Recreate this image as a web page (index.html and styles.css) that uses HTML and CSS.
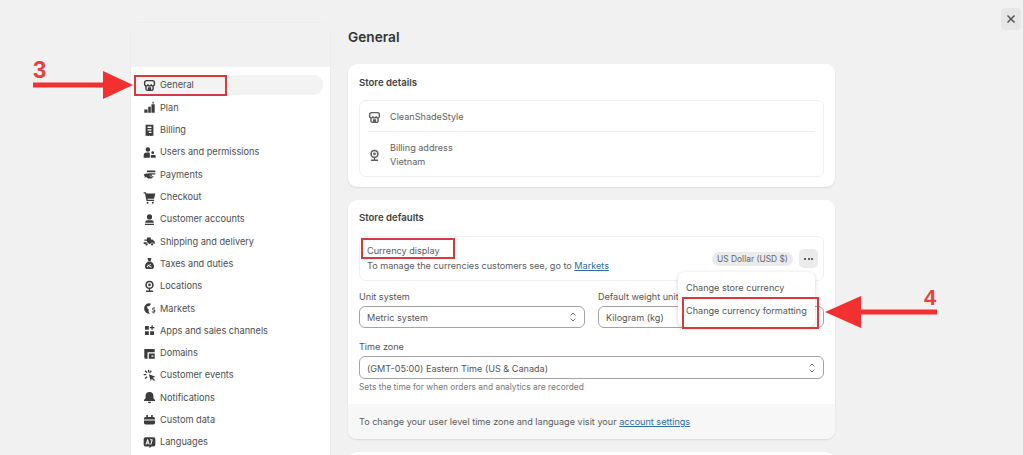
FILE: index.html
```html
<!DOCTYPE html>
<html lang="en">
<head>
<meta charset="utf-8">
<title>General settings</title>
<link rel="stylesheet" href="styles.css">
</head>
<body>
<svg class="sprite" aria-hidden="true">
  <symbol id="i-store" viewBox="0 0 20 20"><path fill="none" stroke="currentColor" stroke-width="2.200" d="M5.500 2.500h9a3 3 0 0 1 3 3V8a2.500 2.500 0 0 1-5 .2 2.500 2.500 0 0 1-5 0 2.500 2.500 0 0 1-5-.2V5.500a3 3 0 0 1 3-3ZM4.500 10.500V15a2.500 2.500 0 0 0 2.500 2.500h6a2.500 2.500 0 0 0 2.500-2.500v-4.500"/><path fill="currentColor" d="M7.500 12.500h5V17h-5z"/></symbol>
  <symbol id="i-pin" viewBox="0 0 20 20"><path fill="currentColor" fill-rule="evenodd" d="M10 1a6.500 6.500 0 0 1 1 12.900V16h3.500a1.200 1.200 0 0 1 0 2.500h-9a1.200 1.200 0 0 1 0-2.500H9v-2.100A6.500 6.500 0 0 1 10 1Zm0 2.500a4 4 0 1 0 0 8 4 4 0 0 0 0-8Zm0 2a2 2 0 1 1 0 4 2 2 0 0 1 0-4Z"/></symbol>
</svg>

<div class="page">
  <aside class="sidebar">
    <div class="sidebar-head"></div>
    <nav class="nav">
      <a class="nav-item active"><svg class="ico"><use href="#i-store"/></svg>General</a>
      <a class="nav-item"><svg class="ico" viewBox="0 0 20 20"><path d="M13 5h5v13h-5zM8 9h4v9H8zM2 13h5v5H2zM14.500 1h2v3h-2z"/></svg>Plan</a>
      <a class="nav-item"><svg class="ico" viewBox="0 0 20 20"><path fill-rule="evenodd" d="M4 1h12v18l-2-1.500-2 1.500-2-1.500L8 19l-2-1.500L4 19Zm3 3v2h6V4Zm0 4v2h6V8Zm2 4v2h4v-2Z"/></svg>Billing</a>
      <a class="nav-item"><svg class="ico" viewBox="0 0 20 20"><path d="M7.500 2a3.500 3.500 0 1 1 0 7 3.500 3.500 0 0 1 0-7ZM1 18v-3a5 5 0 0 1 5-5h3a4 4 0 0 1 1.500.300V18ZM15 8a2.200 2.200 0 1 1 0 4.400A2.200 2.200 0 0 1 15 8Zm-3 6h6a1.500 1.500 0 0 1 1.500 1.500V18H12Z"/></svg>Users and permissions</a>
      <a class="nav-item"><svg class="ico" viewBox="0 0 20 20"><path d="M6 4h13v2.500H6zM8 8h11v2H8zM1 10l5-2 3 2 5 .5v1.500H9l3 1 5-.5-4 3.500H8l-3-2-4 1 2-1.500-1-1.500Z"/></svg>Payments</a>
      <a class="nav-item"><svg class="ico" viewBox="0 0 20 20"><path d="M1 2h3.500l.5 2h14l-2 8H7l.3 1.500H17V15.500H5.500L3 4H1ZM7 16.500a1.500 1.500 0 1 1 0 3 1.500 1.500 0 0 1 0-3Zm8 0a1.500 1.500 0 1 1 0 3 1.500 1.500 0 0 1 0-3Z"/></svg>Checkout</a>
      <a class="nav-item"><svg class="ico" viewBox="0 0 20 20"><path d="M10 2a4 4 0 1 1 0 8 4 4 0 0 1 0-8ZM6.500 11h7a3 3 0 0 1 3 3v1H3.500v-1a3 3 0 0 1 3-3ZM3 16.500h14V18.500H3Z"/></svg>Customer accounts</a>
      <a class="nav-item"><svg class="ico" viewBox="0 0 20 20"><path d="M6 4h6v3h2.500l3.500 3v4h-1.500a2.500 2.500 0 0 0-5 0h-2.500a2.500 2.500 0 0 0-5 0H1v-3h5V9H2V7h4Zm-.5 8.500a1.800 1.800 0 1 1 0 3.600 1.800 1.800 0 0 1 0-3.600Zm8.500 0a1.800 1.800 0 1 1 0 3.600 1.800 1.800 0 0 1 0-3.600Z"/></svg>Shipping and delivery</a>
      <a class="nav-item"><svg class="ico" viewBox="0 0 20 20"><path fill-rule="evenodd" d="M7 1.500h6L11.800 6H8.200ZM8 7h4c3 1.500 5 4.500 5 7.500 0 2.500-2 4-4 4H7c-2 0-4-1.500-4-4C3 11.500 5 8.500 8 7Zm-.5 4.500L6.500 12.500l6 4 1-1Zm.5 3a1 1 0 1 0 0 .1Zm4-3a1 1 0 1 0 0 .1Z"/></svg>Taxes and duties</a>
      <a class="nav-item"><svg class="ico"><use href="#i-pin"/></svg>Locations</a>
      <a class="nav-item"><svg class="ico" viewBox="0 0 20 20"><path d="M9 2a8 8 0 0 1 3.500.800L10 6 6 7l1 3 2 1.500-.5 3 2 3.500A8 8 0 0 1 9 2ZM16 8.500h2.500V10H16a.8.800 0 0 0 0 1.600h1a2.200 2.200 0 0 1 .5 4.300V17.500H16v-1.500h-2.500v-1.500H17a.8.800 0 0 0 0-1.500h-1a2.300 2.300 0 0 1 0-4.500Z"/></svg>Markets</a>
      <a class="nav-item"><svg class="ico" viewBox="0 0 20 20"><path d="M3 3h6v6H3zM3 11h6v6H3zM11 11h6v6h-6zM13 2h2v2.500h2.500v2H15V9h-2V6.500h-2.500v-2H13Z"/></svg>Apps and sales channels</a>
      <a class="nav-item"><svg class="ico" viewBox="0 0 20 20"><path fill-rule="evenodd" d="M2 3h16v5H7v10H4a2 2 0 0 1-2-2ZM9 10h9v8H9Zm4 3v2h3v-2Z"/></svg>Domains</a>
      <a class="nav-item"><svg class="ico" viewBox="0 0 20 20"><path d="M9 8l10 4-4 1.500 3.500 3.500-1.500 1.500-3.500-3.500L12 19ZM7.500 1h2v4h-2zM1 7.500h4v2H1zM2.500 3.500 4 2l3 3-1.500 1.500ZM2.500 14l3-3L7 12.500l-3 3ZM12 2l1.500 1.500-3 3L9 5Z"/></svg>Customer events</a>
      <a class="nav-item"><svg class="ico" viewBox="0 0 20 20"><path d="M10 1.500a6 6 0 0 1 6 6V11l2.500 3v1.500h-17V14L4 11V7.500a6 6 0 0 1 6-6ZM7.500 16.500h5a2.500 2.500 0 0 1-5 0Z"/></svg>Notifications</a>
      <a class="nav-item"><svg class="ico" viewBox="0 0 20 20"><path d="M5 3h2.500v3h5V3H15v3h1a2.500 2.500 0 0 1 2.500 2.500V10h-17V8.500A2.500 2.500 0 0 1 4 6h1ZM1.500 11.500h17V15a2.500 2.500 0 0 1-2.500 2.500H4A2.500 2.500 0 0 1 1.500 15Z"/></svg>Custom data</a>
      <a class="nav-item"><svg class="ico" viewBox="0 0 20 20"><path fill-rule="evenodd" d="M4 2h12a3 3 0 0 1 3 3v8a3 3 0 0 1-3 3h-3l-3 3v-3H4a3 3 0 0 1-3-3V5a3 3 0 0 1 3-3Zm2.500 3L3.800 13h1.700l.5-1.500h2L8.500 13h1.700L7.700 5Zm.5 2.500.6 2.500H6.400ZM11 5v1.500h2.200L11 13h1.800l2-6.500V5Z"/></svg>Languages</a>
    </nav>
  </aside>

  <main class="main">
    <h1 class="page-title">General</h1>

    <section class="card">
      <div class="card-body">
        <h2 class="card-title">Store details</h2>
        <div class="box">
          <div class="detail-row store-row">
            <svg class="ico ico-light"><use href="#i-store"/></svg>
            <span>CleanShadeStyle</span>
          </div>
          <div class="divider"></div>
          <div class="detail-row address-row">
            <svg class="ico ico-light"><use href="#i-pin"/></svg>
            <div><div>Billing address</div><div>Vietnam</div></div>
          </div>
        </div>
      </div>
    </section>

    <section class="card">
      <div class="card-body card-body-tight">
        <h2 class="card-title">Store defaults</h2>
        <div class="box currency-box">
          <div class="currency-text">
            <div class="currency-name">Currency display</div>
            <div>To manage the currencies customers see, go to <a class="link">Markets</a></div>
          </div>
          <span class="badge">US Dollar (USD $)</span>
          <span class="more"><i></i><i></i><i></i></span>
        </div>
        <div class="field-grid">
          <div class="field">
            <label class="label">Unit system</label>
            <div class="select">Metric system<svg class="chev" viewBox="0 0 10 14"><path d="M2 5l3-3 3 3M2 9l3 3 3-3"/></svg></div>
          </div>
          <div class="field">
            <label class="label">Default weight unit</label>
            <div class="select">Kilogram (kg)<svg class="chev" viewBox="0 0 10 14"><path d="M2 5l3-3 3 3M2 9l3 3 3-3"/></svg></div>
          </div>
          <div class="field field-wide">
            <label class="label">Time zone</label>
            <div class="select select-tall">(GMT-05:00) Eastern Time (US &amp; Canada)<svg class="chev" viewBox="0 0 10 14"><path d="M2 5l3-3 3 3M2 9l3 3 3-3"/></svg></div>
            <p class="help">Sets the time for when orders and analytics are recorded</p>
          </div>
        </div>
      </div>
      <div class="card-foot">To change your user level time zone and language visit your <a class="link">account settings</a></div>
    </section>

    <section class="card card-next"></section>
  </main>
</div>

<button class="close" aria-label="Close"><svg viewBox="0 0 10 10"><path d="M1.500 1.500l7 7M8.500 1.500l-7 7"/></svg></button>
<div class="scrollbar"></div>

<div class="menu">
  <div class="menu-item">Change store currency</div>
  <div class="menu-item">Change currency formatting</div>
</div>

<div class="mark mark-general"></div>
<div class="mark mark-currency"></div>
<div class="mark mark-format"></div>

<span class="step step-3">3</span>
<span class="step step-4">4</span>
<svg class="arrow arrow-left" viewBox="0 0 100 28"><path d="M0 11.500h70V0l30 14-30 14V16.500H0Z"/></svg>
<svg class="arrow arrow-right" viewBox="0 0 112 32"><path d="M112 13.500H36V0L0 16l36 16V18.500h76Z"/></svg>
</body>
</html>
```
FILE: styles.css
```css
* { box-sizing: border-box; }
html, body { margin: 0; height: 455px; overflow: hidden; }
body {
  background: #f1f1f1;
  font-family: Inter, "Liberation Sans", sans-serif;
  font-size: 9.200px;
  line-height: 14px;
  color: #4d4d4d;
}
.sprite { display: none; }
.page { display: flex; height: 455px; padding: 23px 0 0 131px; overflow: hidden; }

/* sidebar */
.sidebar {
  width: 199px;
  flex: none;
  height: 460px;
  background: #fff;
  border-radius: 9px 9px 0 0;
  overflow: hidden;
  box-shadow: 0 0 0 1px #ececec;
}
.sidebar-head { height: 44px; background: #f1f1f1; }
.nav { padding: 7.400px 7px 0 4px; display: flex; flex-direction: column; }
.nav-item {
  display: flex;
  align-items: center;
  gap: 4.500px;
  height: 22.300px;
  padding-left: 7.500px;
  border-radius: 9px;
  white-space: nowrap;
}
.nav-item.active { background: #f3f3f3; height: 20px; margin: 1px 0 1.300px; }
.ico { width: 13px; height: 13px; flex: none; fill: #3c3c3c; color: #3c3c3c; }
.ico-light { fill: #5d5d5d; color: #5d5d5d; }

/* main */
.main { width: 505px; padding-left: 18px; flex: none; font-size: 9.100px; }
.page-title { margin: 0 0 13px; font-size: 13.700px; line-height: 29px; height: 28px; font-weight: 600; color: #333; }
.card {
  background: #fff;
  border-radius: 9px;
  margin-bottom: 13px;
  overflow: hidden;
  box-shadow: 0 1px 2px rgba(0, 0, 0, .1);
}
.card-body { padding: 12px 11px 10px; }
.card-body-tight { padding-top: 11px; }
.card-title { margin: 0 0 10px; font-size: 9.600px; line-height: 14px; font-weight: 600; color: #404040; }
.box { border: 1px solid #efefef; border-radius: 7px; }
.detail-row { display: flex; align-items: center; gap: 9px; padding: 2px 8px 0; color: #616161; }
.store-row { height: 30px; }
.address-row { height: 44px; }
.divider { height: 1px; margin: 0 8px; background: #eee; }

.currency-box { display: flex; align-items: center; height: 45px; padding: 0 5px 0 7px; margin-top: 11px; }
.currency-text { flex: 1; color: #5b5b5b; padding-bottom: 1px; }
.currency-name { margin-bottom: 1px; }
.badge { background: #ebebeb; color: #666; border-radius: 7px; font-size: 8.400px; line-height: 14px; padding: 0 4px; width: 81px; text-align: center; white-space: nowrap; margin-right: 6px; }
.more { display: flex; align-items: center; justify-content: center; gap: 1.500px; width: 19px; height: 19px; background: #ebebeb; border-radius: 5px; }
.more i { width: 2px; height: 2px; border-radius: 50%; background: #333; }
.link { color: #2a6f9e; text-decoration: underline; }

.field-grid { display: grid; grid-template-columns: 1fr 1fr; column-gap: 13px; row-gap: 11px; margin-top: 8px; }
.field-wide { grid-column: 1 / -1; }
.label { display: block; padding-top: 1px; margin-bottom: 2px; color: #555; }
.select {
  display: flex;
  align-items: center;
  justify-content: space-between;
  height: 22px;
  padding: 2px 7px 0 7px;
  background: #fff;
  border: 1px solid #a3a3a3;
  border-radius: 6px;
  color: #555;
}
.select-tall { height: 23px; }
.chev { width: 8px; height: 12px; margin-top: -2px; fill: none; stroke: #666; stroke-width: 1.200; }
.help { margin: 2px 0 0; font-size: 8.400px; line-height: 13px; color: #777; }
.card-foot { height: 35px; padding: 0 11px; line-height: 36px; background: #f7f7f7; color: #5b5b5b; white-space: nowrap; }
.card-next { height: 40px; margin-bottom: 0; }

/* overlays */
.close { position: absolute; left: 1001px; top: 8px; width: 20px; height: 22px; padding: 0; border: 0; border-radius: 4px; background: #e6e6e6; display: flex; align-items: center; justify-content: center; }
.close svg { width: 10px; height: 10px; fill: none; stroke: #555; stroke-width: 1.500; }
.scrollbar { position: absolute; left: 1023px; top: 0; width: 1px; height: 455px; background: #d5d5d5; }
.menu {
  position: absolute; left: 678px; top: 272px; width: 137px; height: 55px;
  padding-top: 5px;
  background: #fff; border-radius: 7px;
  box-shadow: 0 1px 4px rgba(0, 0, 0, .18);
  color: #555;
}
.menu-item { padding-left: 8px; height: 23px; line-height: 22px; white-space: nowrap; font-size: 9.100px; }
.mark { position: absolute; border: 2px solid #d63a3a; }
.mark-general { left: 134px; top: 75px; width: 93px; height: 21px; }
.mark-currency { left: 361px; top: 238px; width: 94px; height: 21px; }
.mark-format { left: 682px; top: 297px; width: 137px; height: 32px; }
.step { position: absolute; font-family: "Liberation Sans", sans-serif; font-weight: 700; line-height: 24px; color: #e8403f; }
.step-3 { left: 33px; top: 58px; font-size: 24px; }
.step-4 { left: 924px; top: 286px; font-size: 22px; }
.arrow { position: absolute; fill: #f23030; }
.arrow-left { left: 33px; top: 71px; width: 100px; height: 28px; }
.arrow-right { left: 825px; top: 296px; width: 112px; height: 32px; }
```
